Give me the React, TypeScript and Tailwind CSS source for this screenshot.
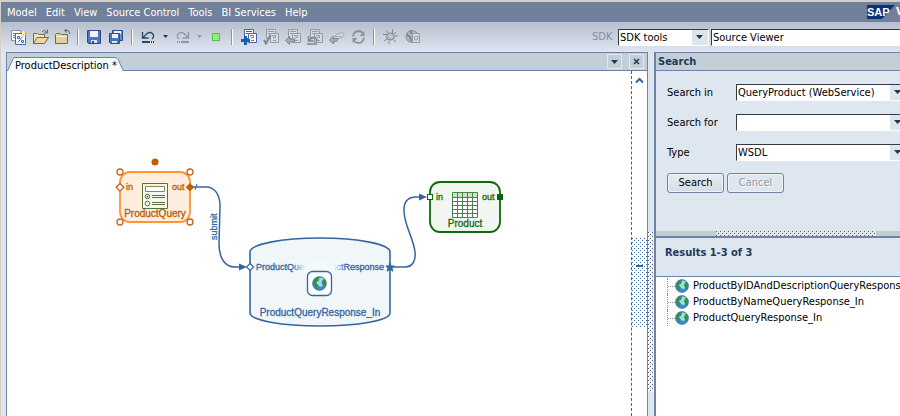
import { clsx } from "clsx";
import type { ReactNode } from "react";

const MENUS = [
  "Model",
  "Edit",
  "View",
  "Source Control",
  "Tools",
  "BI Services",
  "Help",
];

const RESULTS = [
  "ProductByIDAndDescriptionQueryResponse",
  "ProductByNameQueryResponse_In",
  "ProductQueryResponse_In",
];

const SEARCH_FIELDS = [
  { id: "search-in", label: "Search in", value: "QueryProduct (WebService)" },
  { id: "search-for", label: "Search for", value: "" },
  { id: "search-type", label: "Type", value: "WSDL" },
];

function Icon({ children }: { children: ReactNode }) {
  return (
    <svg viewBox="0 0 16 16" className="size-4" aria-hidden="true">
      {children}
    </svg>
  );
}

function NewModelIcon() {
  return (
    <Icon>
      <path d="M.5 1.5h9v10h-9z" fill="#fff" stroke="#7f93c0" />
      <path d="M2 4.5h6M2 6.5h2M2 8.5h2" stroke="#5f79b8" />
      <path d="M4.5 4.5h10v11h-10z" fill="#fff" stroke="#4c68b0" />
      <path d="M6.5 7.5h2v2h-2zM10.5 11.5h2v2h-2zM11.5 7.5l-4.5 6" fill="none" stroke="#4c68b0" />
      <path d="M12.5 0v7M9 3.5h7M10 1l5 5M15 1l-5 5" stroke="#efc94a" />
      <circle cx="12.5" cy="3.5" r="1.5" fill="#fff6b0" />
    </Icon>
  );
}

function OpenIcon() {
  return (
    <Icon>
      <path d="M.5 14.5v-10h4l1 1h6v3" fill="#efe6bd" stroke="#7a6a3a" />
      <path d="M.5 14.5l3.5-6h11.500l-4 6z" fill="#e9d9a0" stroke="#7a6a3a" />
      <path d="M9 3q2.500-3 5 .5M14.500.5v3.500h-3.500" fill="none" stroke="#5c6672" />
    </Icon>
  );
}

function CloseIcon() {
  return (
    <Icon>
      <path d="M.5 14.5v-9l1-1h4l1 1h6v9z" fill="#dfd0a0" stroke="#7a6a3a" />
      <path d="M1 7.500h11" stroke="#f8f1d0" />
      <path d="M14.500 5q1-4-4.500-3.500M12 0l-2.500 1.500 2.500 2" fill="none" stroke="#5c6672" />
    </Icon>
  );
}

function SaveIcon() {
  return (
    <Icon>
      <path d="M.5 1.500h13v13h-12l-1-1z" fill="#4f73bd" stroke="#2b4a8c" />
      <path d="M3 2h8v6h-8z" fill="#eef3fb" />
      <path d="M4 11h6v3h-6z" fill="#dbe4f2" />
      <path d="M5 12h2v2h-2z" fill="#2b4a8c" />
    </Icon>
  );
}

function SaveAllIcon() {
  return (
    <Icon>
      <path d="M3.500 1.500h10v10h-10z" fill="#6a8bcc" stroke="#2b4a8c" />
      <path d="M5 2h7v3h-7z" fill="#eef3fb" />
      <path d="M.5 4.500h10v10h-9l-1-1z" fill="#4f73bd" stroke="#2b4a8c" />
      <path d="M3 5h6v4h-6z" fill="#eef3fb" />
      <path d="M3 12h5v2h-5z" fill="#dbe4f2" />
    </Icon>
  );
}

function UndoIcon({ flipped = false }: { flipped?: boolean }) {
  return (
    <Icon>
      <g
        transform={flipped ? "translate(15 0) scale(-1 1)" : undefined}
        stroke={flipped ? "#8f99a6" : "#2c4764"}
        fill="none"
      >
        <path d="M1.500 3v6h6M2 8.500l4-4q3-2 5.500 0 2.500 3-.5 5.500" strokeWidth="1.300" />
        <path d="M1 13h8" strokeWidth="2" />
        <path d="M10 13h3" strokeWidth="2" strokeDasharray="1 1" />
      </g>
    </Icon>
  );
}

function CaretIcon({ muted = false }: { muted?: boolean }) {
  return (
    <svg viewBox="0 0 6 4" className="h-1 w-1.5" aria-hidden="true">
      <path d="M0 0h5L2.500 3z" fill={muted ? "#8f99a6" : "#1f3a58"} />
    </svg>
  );
}

function StatusIcon() {
  return (
    <Icon>
      <path d="M3.500 4.500h7v7h-7z" fill="#8ff07a" stroke="#4fc04a" />
    </Icon>
  );
}

// Two overlapping sheets, shared by the source control actions
function Sheets({ active = false }: { active?: boolean }) {
  const stroke = active ? "#4a64a8" : "#929ca6";
  const paper = active ? "#fff" : "#d5dae0";
  return (
    <>
      <path d="M3.500.5h9v9h-9z" fill={paper} stroke={stroke} />
      <path d="M5 2.500h6M5 4.500h2" stroke={stroke} />
      <path d="M7.500 4.500h8v9h-8z" fill={paper} stroke={stroke} />
      <path
        d="M9.500 7.500v-1h3v2h-2v1M10 11.500h3"
        fill="none"
        stroke={active ? "#b0703c" : stroke}
      />
    </>
  );
}

function AddSheetIcon() {
  return (
    <Icon>
      <Sheets active />
      <path d="M4.500 7v9M0 11.500h9" stroke="#1560b0" strokeWidth="3" />
    </Icon>
  );
}

function CheckSheetIcon() {
  return (
    <Icon>
      <Sheets />
      <path d="M1 11l2 3.500L7.500 6" fill="none" stroke="#7d8790" strokeWidth="2" />
    </Icon>
  );
}

function CheckInIcon() {
  return (
    <Icon>
      <Sheets />
      <path d="M.5 11.500l4-4v2.500h5v3h-5v2.500z" fill="#a3acb3" stroke="#7d8790" />
    </Icon>
  );
}

function RevertIcon() {
  return (
    <Icon>
      <Sheets />
      <path
        d="M1.500 7v5h5M2 11.500l3-3q3-1 4.500 1.500v3M0 15h10"
        fill="none"
        stroke="#7d8790"
        strokeWidth="1.500"
      />
    </Icon>
  );
}

function SyncIcon() {
  return (
    <Icon>
      <path d="M15.500 5.500l-3.500-3v2H8l-2 3h6v2z" fill="#d0d6db" stroke="#a3acb3" />
      <path d="M.5 11l4-4v2.500h5l-2 3h-3V15z" fill="#a3acb3" stroke="#7d8790" />
    </Icon>
  );
}

function RefreshIcon() {
  return (
    <Icon>
      <g fill="none" stroke="#8a949d" strokeWidth="1.800">
        <path d="M2 7.500q.5-5 5.500-5.500 3 0 4.500 2" />
        <path d="M13 8.500q-.5 5-5.500 5.500-3 0-4.500-2" />
      </g>
      <path d="M13.500 2v5h-5zM1.500 14V9h5z" fill="#8a949d" />
    </Icon>
  );
}

function BugIcon() {
  return (
    <Icon>
      <path
        d="M3 1.500l2.500 3M9.500 0v4M13 3l-2 2M0 5.500h4M15 7h-3.500M1 12l3.500-2.500M6 15v-3.500M13 13l-3-2.500"
        stroke="#808a94"
      />
      <ellipse cx="7.500" cy="7.500" rx="4" ry="3.500" fill="#b3bbc2" stroke="#808a94" />
      <path d="M6 6.500l3 2" stroke="#dfe4e8" />
    </Icon>
  );
}

function PublishIcon() {
  return (
    <Icon>
      <circle cx="7" cy="7.500" r="6" fill="#b3bbc2" stroke="#808a94" />
      <path d="M2 5q2 3 3 3l1 4M5 2q2 1 1 3" fill="none" stroke="#7d8790" strokeWidth="2" />
      <path d="M7.500 4.500h7v9h-7z" fill="#d5dae0" stroke="#929ca6" />
      <circle cx="11" cy="9" r="2" fill="none" stroke="#929ca6" />
    </Icon>
  );
}

function GlobeShape() {
  return (
    <>
      <circle cx="7.500" cy="7.500" r="7" fill="#3f8ad6" />
      <ellipse cx="9" cy="6" rx="4.500" ry="4.500" fill="#a5d6fa" />
      <path
        d="M1.500 4.500Q3 1.500 6 1l2 .5-1.500 1.500 1 1-2 1.500-1.500.5.500 1.500 2 1.500-1 2-1 2-1.500-1.500-.5-2.500L1 7zM10.500 4l2-1 1.500 3-.5 3.500-1.500 2-1-.5-.5-2.500-1-1z"
        fill="#2f9a3c"
      />
      <circle cx="7.500" cy="7.500" r="6.800" fill="none" stroke="#2c62a6" strokeWidth=".7" />
    </>
  );
}

function ToolButton({
  label,
  children,
}: {
  label: string;
  children: ReactNode;
}) {
  return (
    <button type="button" aria-label={label} className="flex shrink-0 items-center">
      {children}
    </button>
  );
}

function Separator() {
  return (
    <div className="mr-0.5 h-4 w-0.5 shrink-0 border-l border-[#8795ab] bg-white" />
  );
}

function Dots({ id, color }: { id: string; color: string }) {
  return (
    <svg className="block size-full" shapeRendering="crispEdges" aria-hidden="true">
      <defs>
        <pattern id={id} width="4" height="4" patternUnits="userSpaceOnUse">
          <rect width="1" height="1" fill={color} />
          <rect x="2" y="2" width="1" height="1" fill={color} />
        </pattern>
      </defs>
      <rect width="100%" height="100%" fill={`url(#${id})`} />
    </svg>
  );
}

function Dropdown({
  id,
  label,
  value,
  className,
}: {
  id: string;
  label?: string;
  value: string;
  className?: string;
}) {
  return (
    <div className={clsx("relative shrink-0", className)}>
      <select
        id={id}
        aria-label={label}
        defaultValue={value}
        className="block h-[17px] w-full appearance-none border border-t-[#333a44] border-r-white border-b-white border-l-[#333a44] bg-white pr-4 pl-px leading-[15px] text-black"
      >
        <option value={value}>{value}</option>
      </select>
      <span className="pointer-events-none absolute top-px right-px flex h-[15px] w-4 items-center justify-center bg-[#dce4ee]">
        <svg viewBox="0 0 8 4" className="h-1 w-2" aria-hidden="true">
          <path d="M0 0h7L3.500 4z" fill="#1f3a58" />
        </svg>
      </span>
    </div>
  );
}

function MenuBar() {
  return (
    <header className="flex h-5 items-center bg-[#71809b] pl-1.5 text-white">
      <nav className="flex flex-1 gap-[9px] pt-0.5">
        {MENUS.map((menu) => (
          <button key={menu} type="button" className="whitespace-nowrap">
            {menu}
          </button>
        ))}
      </nav>
      <div className="flex h-full w-[33px] shrink-0 items-center gap-px overflow-hidden">
        <svg viewBox="0 0 28 14" className="h-3.5 w-7 shrink-0" aria-label="SAP">
          <path d="M0 0h28L15 14H0z" fill="#0a3272" />
          <text
            x="0"
            y="11"
            fill="#fff"
            className="font-['Liberation_Sans'] text-[11px] font-bold"
          >
            SAP
          </text>
        </svg>
        <span className="font-bold">V</span>
      </div>
    </header>
  );
}

function Toolbar() {
  return (
    <div className="flex h-[30px] items-center gap-1.5 bg-linear-to-b from-[#b7bece] to-[#dfe6ef] pl-2.5">
      <ToolButton label="New model"><NewModelIcon /></ToolButton>
      <ToolButton label="Open model"><OpenIcon /></ToolButton>
      <ToolButton label="Close model"><CloseIcon /></ToolButton>
      <Separator />
      <ToolButton label="Save"><SaveIcon /></ToolButton>
      <ToolButton label="Save all"><SaveAllIcon /></ToolButton>
      <Separator />
      <ToolButton label="Undo"><UndoIcon /></ToolButton>
      <ToolButton label="Undo history"><CaretIcon /></ToolButton>
      <ToolButton label="Redo"><UndoIcon flipped /></ToolButton>
      <ToolButton label="Redo history"><CaretIcon muted /></ToolButton>
      <ToolButton label="Status"><StatusIcon /></ToolButton>
      <Separator />
      <ToolButton label="Add to source control"><AddSheetIcon /></ToolButton>
      <ToolButton label="Check out"><CheckSheetIcon /></ToolButton>
      <ToolButton label="Check in"><CheckInIcon /></ToolButton>
      <ToolButton label="Revert"><RevertIcon /></ToolButton>
      <ToolButton label="Synchronize"><SyncIcon /></ToolButton>
      <ToolButton label="Refresh"><RefreshIcon /></ToolButton>
      <Separator />
      <ToolButton label="Debug"><BugIcon /></ToolButton>
      <ToolButton label="Publish"><PublishIcon /></ToolButton>
      <div className="ml-auto flex w-[308px] shrink-0 items-center gap-0.5 overflow-hidden">
        <label htmlFor="sdk" className="w-6 shrink-0 text-[#8090a8]">
          SDK
        </label>
        <Dropdown id="sdk" value="SDK tools" className="w-[91px]" />
        <Dropdown id="viewer" label="Viewer" value="Source Viewer" className="w-56" />
      </div>
    </div>
  );
}

const NODE_TEXT = "font-['Liberation_Sans'] text-[10px]";
const PORT_TEXT = "font-['Liberation_Sans'] text-[9px]";

function QueryNode() {
  return (
    <g transform="translate(113 101)">
      <rect width="70" height="50" rx="10" fill="#ffeedd" stroke="#ff9535" strokeWidth="1.800" />
      <circle cx="35" cy="-10" r="3.500" fill="#c06000" />
      <g fill="#fff" stroke="#c0661a" strokeWidth="1.300">
        <circle cx="0" cy="0" r="3" />
        <circle cx="70" cy="0" r="3" />
        <circle cx="0" cy="50" r="3" />
        <circle cx="70" cy="50" r="3" />
        <path d="M0 11.500L3.800 15.300 0 19.100-3.800 15.300z" />
      </g>
      <path d="M70 11l4.300 4.300-4.300 4.300-4.300-4.300z" fill="#c06000" />
      <g fill="none" stroke="#5d7040">
        <path d="M22.500 11.500h25v25h-25z" fill="#f5f7ee" />
        <path d="M25.500 14.500h19v5h-19z" fill="#fff" stroke="#7d8a50" />
        <circle cx="27.500" cy="24.500" r="2.300" />
        <circle cx="27.500" cy="31.500" r="2.300" />
        <path d="M32 23.500h13M32 25.500h13M32 30.500h13M32 32.500h13" />
      </g>
      <circle cx="27.500" cy="24.500" r="1" fill="#5d7040" />
      <g fill="#b85c08" stroke="#b85c08" strokeWidth=".3">
        <text x="6" y="18" className={PORT_TEXT}>in</text>
        <text x="52" y="18" className={PORT_TEXT}>out</text>
        <text x="35" y="45" textAnchor="middle" className={NODE_TEXT}>
          ProductQuery
        </text>
      </g>
    </g>
  );
}

function ServiceNode() {
  return (
    <g transform="translate(243 167)">
      <path
        d="M0 14A70 14 0 0 1 140 14V75A70 13 0 0 1 0 75z"
        fill="#f1f6f9"
        stroke="#34659f"
        strokeWidth="1.600"
      />
      <g fill="#34659f" stroke="#34659f" strokeWidth=".3">
        <text x="6" y="32" className={PORT_TEXT}>ProductQuery</text>
        <text x="134" y="32" textAnchor="end" className={PORT_TEXT}>
          ProductResponse
        </text>
        <text x="70" y="78" textAnchor="middle" className={NODE_TEXT}>
          ProductQueryResponse_In
        </text>
      </g>
      <rect x="42" y="23" width="54" height="12" fill="url(#port-fade)" />
      <rect x="57.500" y="33.500" width="24" height="24" rx="5" fill="#fff" stroke="#34659f" strokeWidth="1.300" />
      <g transform="translate(62 38)">
        <GlobeShape />
      </g>
      <path d="M0 25.500l3.500 3.500L0 32.500-3.500 29z" fill="#fff" stroke="#34659f" strokeWidth="1.200" />
      <path
        d="M140 25l1.200 3h3l-2.300 2 1 3.200-2.900-1.900-2.900 1.900 1-3.200-2.300-2h3z"
        fill="#34659f"
        stroke="#34659f"
      />
    </g>
  );
}

function ProductNode() {
  return (
    <g transform="translate(423 111)">
      <rect width="70" height="50" rx="10" fill="#f1f6f0" stroke="#0c6b0c" strokeWidth="1.800" />
      <path d="M22.500 10.500h25v25h-25z" fill="#fff" />
      <path d="M22.500 10.500h25v5h-25z" fill="#cfe0cf" />
      <path
        d="M22.500 10.500h25v25h-25zM22.500 15.500h25M22.500 19.500h25M22.500 23.500h25M22.500 27.500h25M22.500 31.500h25M27.500 10.500v25M32.500 10.500v25M37.500 10.500v25M42.500 10.500v25"
        fill="none"
        stroke="#4a824a"
      />
      <rect x="-2.500" y="12.500" width="5" height="5" fill="#fff" stroke="#0c6b0c" />
      <rect x="67" y="12" width="6" height="6" fill="#0a640a" />
      <g fill="#0c6b0c" stroke="#0c6b0c" strokeWidth=".3">
        <text x="6" y="18" className={PORT_TEXT}>in</text>
        <text x="52" y="18" className={PORT_TEXT}>out</text>
        <text x="35" y="45" textAnchor="middle" className={NODE_TEXT}>
          Product
        </text>
      </g>
    </g>
  );
}

function Diagram() {
  return (
    <svg className="h-full min-w-0 flex-1" role="img" aria-label="Model diagram">
      <defs>
        <linearGradient id="port-fade">
          <stop offset="0" stopColor="#f1f6f9" stopOpacity="0" />
          <stop offset=".25" stopColor="#f3f8fa" />
          <stop offset=".78" stopColor="#f3f8fa" />
          <stop offset="1" stopColor="#f1f6f9" stopOpacity="0" />
        </linearGradient>
      </defs>
      <g fill="none" stroke="#34659f" strokeWidth="1.500">
        <path d="M185 116h14c9 0 14 8 14 19l-1 38c0 14 6 23 16 23h6" />
        <path d="M188 119l2-6" strokeWidth="1" />
        <path d="M385 196h13c8 0 11-7 10-15-2-16-11-26-11-42 0-8 4-13 12-13h6" />
      </g>
      <path d="M232 192.500l8 3.500-8 3.500zM412 122.500l8 3.500-8 3.500z" fill="#34659f" />
      <text
        transform="translate(210 169) rotate(-90)"
        fill="#34659f"
        stroke="#34659f"
        strokeWidth=".3"
        className={PORT_TEXT}
      >
        submit
      </text>
      <QueryNode />
      <ServiceNode />
      <ProductNode />
    </svg>
  );
}

function PaletteStrip() {
  return (
    <aside className="flex w-4 shrink-0 flex-col items-center border-l border-dashed border-[#34659f]">
      <button type="button" aria-label="Scroll up" className="mt-1 mb-[152px] p-0.5">
        <svg viewBox="0 0 9 7" className="h-[7px] w-[9px]" aria-hidden="true">
          <path d="M1 5.500l3.500-3.500 3.500 3.500" fill="none" stroke="#34659f" strokeWidth="2" />
        </svg>
      </button>
      <button type="button" aria-label="Collapse palette" className="relative h-[90px] w-full">
        <Dots id="palette-dots" color="#34659f" />
        <span className="absolute inset-x-1 top-[27px] h-0.5 bg-[#34659f]" />
      </button>
    </aside>
  );
}

function HeaderButton({
  label,
  children,
}: {
  label: string;
  children: ReactNode;
}) {
  return (
    <button
      type="button"
      aria-label={label}
      className="flex size-[15px] items-center justify-center border border-[#e2e9ef] text-[#1f3a58]"
    >
      {children}
    </button>
  );
}

function ModelPanel() {
  return (
    <main className="flex min-w-0 flex-1 flex-col border border-b-0 border-[#6e83a5] bg-white">
      <div className="flex h-[18px] shrink-0 items-center justify-between border-b border-[#6e83a5] bg-[#c3cfd7]">
        <button type="button" className="relative -mb-px h-3.5 w-[117px] self-end pl-px">
          <svg viewBox="0 0 117 14" className="absolute inset-0 size-full" aria-hidden="true">
            <path d="M.5 14L6 2q.5-1.500 2-1.500h100q2 0 3 2L116.500 14" fill="#f7fafb" stroke="#6e83a5" />
          </svg>
          <span className="relative block leading-[17px] whitespace-nowrap">
            ProductDescription *
          </span>
        </button>
        <div className="flex gap-[7px] pr-[3px]">
          <HeaderButton label="Open editors">
            <svg viewBox="0 0 8 4" className="h-1 w-2" aria-hidden="true">
              <path d="M0 0h7L3.500 4z" fill="currentColor" />
            </svg>
          </HeaderButton>
          <HeaderButton label="Close editor">
            <svg viewBox="0 0 7 7" className="size-[7px]" aria-hidden="true">
              <path d="M1 1l5 5M6 1l-5 5" stroke="currentColor" strokeWidth="1.600" />
            </svg>
          </HeaderButton>
        </div>
      </div>
      <div className="flex min-h-0 flex-1">
        <Diagram />
        <PaletteStrip />
      </div>
    </main>
  );
}

function SearchPanel() {
  return (
    <section className="flex w-[246px] shrink-0 flex-col overflow-hidden border-t border-l-2 border-[#6e83a5] bg-[#dee6ef]">
      <h2 className="h-[18px] shrink-0 border-b border-[#6e83a5] bg-[#c3cfd7] pl-0.5 leading-[18px] font-bold text-[#1f3a58]">
        Search
      </h2>
      <form
        className="flex flex-col gap-3 pt-3 pb-[38px] pl-[11px]"
        onSubmit={(event) => event.preventDefault()}
      >
        {SEARCH_FIELDS.map((field) => (
          <div key={field.id} className="flex h-[18px] items-center">
            <label htmlFor={field.id} className="w-[69px] shrink-0 pt-0.5 text-black">
              {field.label}
            </label>
            <Dropdown id={field.id} value={field.value} className="w-[171px]" />
          </div>
        ))}
        <div className="flex gap-[3px]">
          <button
            type="submit"
            className="h-5 w-[57px] rounded-[3px] border border-[#6e83a5] bg-linear-to-b from-[#e6ecf3] to-[#d5dde7] text-black shadow-[inset_0_0_0_1px_#eef3f8]"
          >
            Search
          </button>
          <button
            type="button"
            disabled
            className="h-5 w-[57px] rounded-[3px] border border-[#6e83a5] bg-[#dee6ef] text-[#8f9aa8] shadow-[inset_0_0_0_1px_#eef3f8] [text-shadow:1px_1px_0_#fff]"
          >
            Cancel
          </button>
        </div>
      </form>
      <div className="h-[7px] shrink-0 border-b-2 border-[#6e83a5] bg-[#c3ccd3] pl-[60px]">
        <div className="h-[5px] w-40 bg-[#dfe5ea]">
          <Dots id="results-splitter" color="#5a6678" />
        </div>
      </div>
      <h3 className="h-[39px] shrink-0 border-b border-[#6e83a5] pt-[7px] pl-[9px] font-bold text-[#1f3a58]">
        Results 1-3 of 3
      </h3>
      <ul className="flex-1 bg-white pt-px">
        {RESULTS.map((name) => (
          <li key={name} className="flex h-4 items-center pl-[11px]">
            <span className="flex h-4 w-2 shrink-0 items-center border-l border-dotted border-[#8a96a6]">
              <span className="w-full border-t border-dotted border-[#8a96a6]" />
            </span>
            <svg viewBox="0 0 15 15" className="mr-1 size-3.5 shrink-0" aria-hidden="true">
              <GlobeShape />
            </svg>
            <a href="#result" className="whitespace-nowrap text-black">
              {name}
            </a>
          </li>
        ))}
      </ul>
    </section>
  );
}

export default function App() {
  return (
    <div className="flex h-screen flex-col overflow-hidden border-t-2 border-l border-[#d4d0c8] bg-[#dee6ef] font-['DejaVu_Sans_Condensed','DejaVu_Sans',sans-serif] text-[11px] leading-4 text-black">
      <MenuBar />
      <Toolbar />
      <div className="flex min-h-0 flex-1 pl-[5px]">
        <ModelPanel />
        <div className="flex w-1.5 shrink-0 flex-col pt-[180px]">
          <div className="h-40 bg-[#eef2f6]">
            <Dots id="panel-splitter" color="#5a6678" />
          </div>
        </div>
        <SearchPanel />
      </div>
    </div>
  );
}
